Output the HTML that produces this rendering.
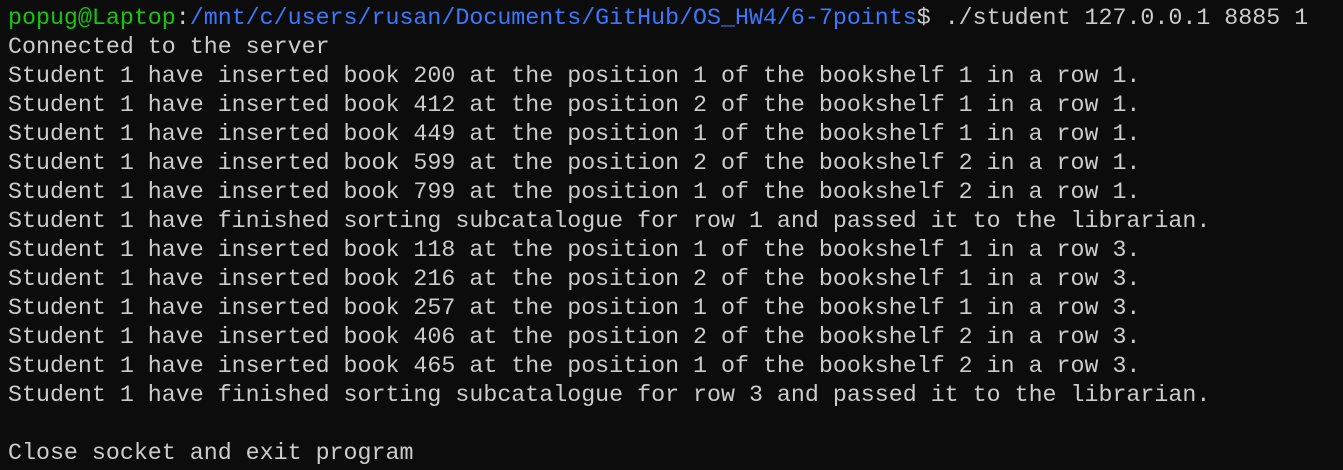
<!DOCTYPE html>
<html><head><meta charset="utf-8"><style>
html,body{margin:0;padding:0;background:#0c0c0c;width:1343px;height:470px;overflow:hidden}
pre{margin:0;padding:4px 0 0 8px;font-family:"Liberation Mono","DejaVu Sans Mono",monospace;font-size:23.3px;line-height:29px;color:#cccccc;white-space:pre}
.g{color:#16c60c}.b{color:#3b78ff}
</style></head><body><pre><span class="g">popug@Laptop</span>:<span class="b">/mnt/c/users/rusan/Documents/GitHub/OS_HW4/6-7points</span>$ ./student 127.0.0.1 8885 1
Connected to the server
Student 1 have inserted book 200 at the position 1 of the bookshelf 1 in a row 1.
Student 1 have inserted book 412 at the position 2 of the bookshelf 1 in a row 1.
Student 1 have inserted book 449 at the position 1 of the bookshelf 1 in a row 1.
Student 1 have inserted book 599 at the position 2 of the bookshelf 2 in a row 1.
Student 1 have inserted book 799 at the position 1 of the bookshelf 2 in a row 1.
Student 1 have finished sorting subcatalogue for row 1 and passed it to the librarian.
Student 1 have inserted book 118 at the position 1 of the bookshelf 1 in a row 3.
Student 1 have inserted book 216 at the position 2 of the bookshelf 1 in a row 3.
Student 1 have inserted book 257 at the position 1 of the bookshelf 1 in a row 3.
Student 1 have inserted book 406 at the position 2 of the bookshelf 2 in a row 3.
Student 1 have inserted book 465 at the position 1 of the bookshelf 2 in a row 3.
Student 1 have finished sorting subcatalogue for row 3 and passed it to the librarian.

Close socket and exit program</pre></body></html>
